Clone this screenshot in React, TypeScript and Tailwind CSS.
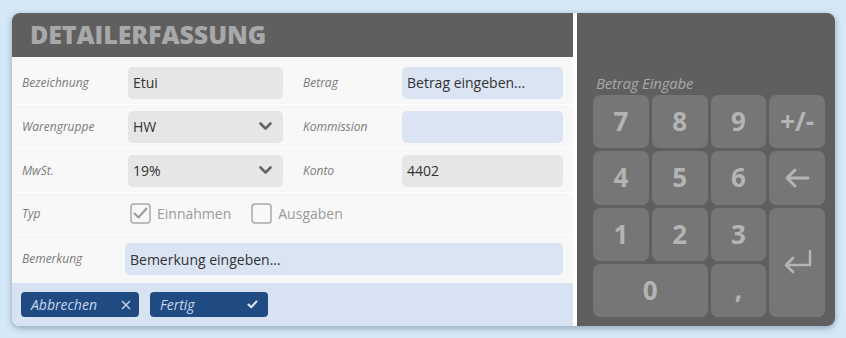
import { ReactNode } from 'react';

const font = { fontFamily: '"Open Sans", "Liberation Sans", sans-serif' };

function Label({ children, className = '' }: { children: ReactNode; className?: string }) {
  return <div className={`shrink-0 text-[12px] italic text-[#7a7a7a] ${className}`}>{children}</div>;
}

function Field({ value, tone, className = '' }: { value?: string; tone: 'gray' | 'blue'; className?: string }) {
  const bg = tone === 'gray' ? 'bg-[#e6e6e6]' : 'bg-[#dae4f3]';
  return (
    <div className={`flex h-8 items-center rounded-[5px] px-[5px] text-[14px] text-[#333] ${bg} ${className}`}>
      {value}
    </div>
  );
}

function Select({ value }: { value: string }) {
  return (
    <div className="flex h-8 w-[155px] items-center justify-between rounded-[5px] bg-[#e6e6e6] pl-[5px] pr-[11px] text-[14px] text-[#333]">
      <span>{value}</span>
      <svg width="13" height="9" viewBox="0 0 13 9">
        <path d="M1.5 1.5 L6.5 6.5 L11.5 1.5" fill="none" stroke="#666" strokeWidth="2.6" strokeLinecap="round" strokeLinejoin="round" />
      </svg>
    </div>
  );
}

function Check({ checked, label }: { checked?: boolean; label: string }) {
  return (
    <div className="flex items-center gap-[6px] text-[14px] text-[#9a9a9a]">
      <svg width="21" height="21" viewBox="0 0 21 21">
        <rect x="1" y="1" width="19" height="19" rx="3" fill="none" stroke="#a8a8a8" strokeWidth="1.5" />
        {checked && (
          <path d="M4.5 10.5 L8.5 14.5 L16.5 5.5" fill="none" stroke="#9a9a9a" strokeWidth="2" strokeLinecap="round" strokeLinejoin="round" />
        )}
      </svg>
      <span>{label}</span>
    </div>
  );
}

function Row({ children, className = '' }: { children: ReactNode; className?: string }) {
  return <div className={`flex items-center border-b border-white px-[10px] ${className}`}>{children}</div>;
}

function Key({ children, className = '' }: { children: ReactNode; className?: string }) {
  return (
    <div className={`flex items-center justify-center rounded-[7px] bg-[#767676] text-[26px] font-bold text-[#b4b4b4] ${className}`}>
      {children}
    </div>
  );
}

export default function App() {
  return (
    <div className="flex h-[338px] w-[846px] bg-[#d5e8f8] pl-[12px] pt-[13px]" style={font}>
      <div className="flex h-[313px] w-[823px] overflow-hidden rounded-[8px] shadow-[0_2px_6px_rgba(60,80,100,0.45)]">
        {/* Form */}
        <div className="flex w-[561px] flex-col bg-[#f8f8f8]">
          <div className="flex h-[44px] items-center bg-[#5f5f5f] pl-[18px] text-[25px] font-extrabold tracking-[-0.1px] text-[#a8a8a8]">
            DETAILERFASSUNG
          </div>
          <div className="h-[4px]" />
          <Row className="h-[44px]">
            <Label className="w-[106px]">Bezeichnung</Label>
            <Field value="Etui" tone="gray" className="w-[155px]" />
            <Label className="ml-[20px] w-[99px]">Betrag</Label>
            <Field value="Betrag eingeben..." tone="blue" className="w-[161px]" />
          </Row>
          <Row className="h-[44px]">
            <Label className="w-[106px]">Warengruppe</Label>
            <Select value="HW" />
            <Label className="ml-[20px] w-[99px]">Kommission</Label>
            <Field tone="blue" className="w-[161px]" />
          </Row>
          <Row className="h-[44px]">
            <Label className="w-[106px]">MwSt.</Label>
            <Select value="19%" />
            <Label className="ml-[20px] w-[99px]">Konto</Label>
            <Field value="4402" tone="gray" className="w-[161px]" />
          </Row>
          <Row className="h-[42px]">
            <Label className="w-[108px]">Typ</Label>
            <Check checked label="Einnahmen" />
            <div className="w-[20px]" />
            <Check label="Ausgaben" />
          </Row>
          <div className="flex h-[48px] items-center px-[10px]">
            <Label className="w-[103px]">Bemerkung</Label>
            <Field value="Bemerkung eingeben..." tone="blue" className="flex-1" />
          </div>
          <div className="flex flex-1 items-center gap-[11px] bg-[#d7e3f2] px-[9px]">
            <div className="flex h-[25px] w-[118px] items-center justify-between rounded-[4px] bg-[#1f4b82] pl-[10px] pr-[8px] text-[14px] italic text-[#c9d6ea]">
              <span>Abbrechen</span>
              <svg width="10" height="10" viewBox="0 0 10 10">
                <path d="M1 1 L9 9 M9 1 L1 9" stroke="#c9d6ea" strokeWidth="1.4" />
              </svg>
            </div>
            <div className="flex h-[25px] w-[118px] items-center justify-between rounded-[4px] bg-[#1f4b82] pl-[10px] pr-[10px] text-[14px] italic text-[#c9d6ea]">
              <span>Fertig</span>
              <svg width="11" height="9" viewBox="0 0 11 9">
                <path d="M1.5 4.5 L4.2 7.2 L9.5 1.5" fill="none" stroke="#e0e8f4" strokeWidth="2" strokeLinecap="round" strokeLinejoin="round" />
              </svg>
            </div>
          </div>
        </div>
        <div className="w-[4px] bg-white" />
        {/* Keypad */}
        <div className="flex flex-1 flex-col justify-end bg-[#5f5f5f] pb-[9px] pl-[16px] pr-[10px]">
          <div className="mb-[1px] pl-[3px] text-[15px] italic tracking-[-0.2px] text-[#a8a8a8]">Betrag Eingabe</div>
          <div className="grid h-[222px] grid-cols-4 grid-rows-4 gap-[3px]">
            <Key>7</Key>
            <Key>8</Key>
            <Key>9</Key>
            <Key className="text-[20px]">+/-</Key>
            <Key>4</Key>
            <Key>5</Key>
            <Key>6</Key>
            <Key>
              <svg width="26" height="22" viewBox="0 0 26 22">
                <path d="M24 11 H3 M11 3 L3 11 L11 19" fill="none" stroke="#b4b4b4" strokeWidth="3" strokeLinecap="round" strokeLinejoin="round" />
              </svg>
            </Key>
            <Key>1</Key>
            <Key>2</Key>
            <Key>3</Key>
            <Key className="row-span-2">
              <svg width="31" height="27" viewBox="0 0 31 27">
                <path d="M28 2 V16 H4 M11 9 L4 16 L11 23" fill="none" stroke="#b4b4b4" strokeWidth="2.6" strokeLinecap="round" strokeLinejoin="round" />
              </svg>
            </Key>
            <Key className="col-span-2">0</Key>
            <Key className="items-end pb-[8px]">,</Key>
          </div>
        </div>
      </div>
    </div>
  );
}
